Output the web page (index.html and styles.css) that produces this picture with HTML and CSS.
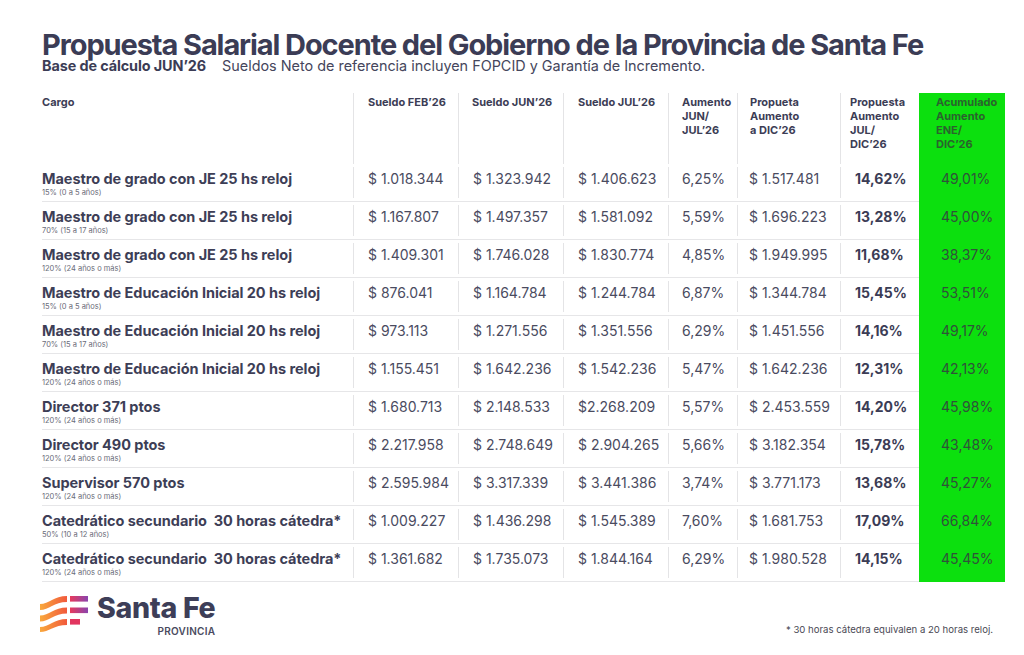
FILE: index.html
```html
<!DOCTYPE html>
<html lang="es">
<head>
<meta charset="utf-8">
<title>Propuesta Salarial Docente</title>
<link rel="stylesheet" href="styles.css">
</head>
<body>
<main class="page">
  <h1 class="title">Propuesta Salarial Docente del Gobierno de la Provincia de Santa Fe</h1>
  <p class="subtitle"><strong>Base de cálculo JUN’26</strong> Sueldos Neto de referencia incluyen FOPCID y Garantía de Incremento.</p>

  <div class="table">
    <div class="row head">
      <div class="cell">Cargo</div>
      <div class="cell">Sueldo FEB’26</div>
      <div class="cell">Sueldo JUN’26</div>
      <div class="cell">Sueldo JUL’26</div>
      <div class="cell">Aumento<br>JUN/<br>JUL’26</div>
      <div class="cell">Propueta<br>Aumento<br>a DIC’26</div>
      <div class="cell">Propuesta<br>Aumento<br>JUL/<br>DIC’26</div>
      <div class="cell green">Acumulado<br>Aumento<br>ENE/<br>DIC’26</div>
    </div>

    <div class="row body">
      <div class="cell name"><span class="cargo">Maestro de grado con JE 25 hs reloj</span><span class="sub">15% (0 a 5 años)</span></div>
      <div class="cell">$ 1.018.344</div><div class="cell">$ 1.323.942</div><div class="cell">$ 1.406.623</div>
      <div class="cell">6,25%</div><div class="cell">$ 1.517.481</div><div class="cell bold">14,62%</div><div class="cell green">49,01%</div>
    </div>
    <div class="row body">
      <div class="cell name"><span class="cargo">Maestro de grado con JE 25 hs reloj</span><span class="sub">70% (15 a 17 años)</span></div>
      <div class="cell">$ 1.167.807</div><div class="cell">$ 1.497.357</div><div class="cell">$ 1.581.092</div>
      <div class="cell">5,59%</div><div class="cell">$ 1.696.223</div><div class="cell bold">13,28%</div><div class="cell green">45,00%</div>
    </div>
    <div class="row body">
      <div class="cell name"><span class="cargo">Maestro de grado con JE 25 hs reloj</span><span class="sub">120% (24 años o más)</span></div>
      <div class="cell">$ 1.409.301</div><div class="cell">$ 1.746.028</div><div class="cell">$ 1.830.774</div>
      <div class="cell">4,85%</div><div class="cell">$ 1.949.995</div><div class="cell bold">11,68%</div><div class="cell green">38,37%</div>
    </div>
    <div class="row body">
      <div class="cell name"><span class="cargo">Maestro de Educación Inicial 20 hs reloj</span><span class="sub">15% (0 a 5 años)</span></div>
      <div class="cell">$ 876.041</div><div class="cell">$ 1.164.784</div><div class="cell">$ 1.244.784</div>
      <div class="cell">6,87%</div><div class="cell">$ 1.344.784</div><div class="cell bold">15,45%</div><div class="cell green">53,51%</div>
    </div>
    <div class="row body">
      <div class="cell name"><span class="cargo">Maestro de Educación Inicial 20 hs reloj</span><span class="sub">70% (15 a 17 años)</span></div>
      <div class="cell">$ 973.113</div><div class="cell">$ 1.271.556</div><div class="cell">$ 1.351.556</div>
      <div class="cell">6,29%</div><div class="cell">$ 1.451.556</div><div class="cell bold">14,16%</div><div class="cell green">49,17%</div>
    </div>
    <div class="row body">
      <div class="cell name"><span class="cargo">Maestro de Educación Inicial 20 hs reloj</span><span class="sub">120% (24 años o más)</span></div>
      <div class="cell">$ 1.155.451</div><div class="cell">$ 1.642.236</div><div class="cell">$ 1.542.236</div>
      <div class="cell">5,47%</div><div class="cell">$ 1.642.236</div><div class="cell bold">12,31%</div><div class="cell green">42,13%</div>
    </div>
    <div class="row body">
      <div class="cell name"><span class="cargo">Director 371 ptos</span><span class="sub">120% (24 años o más)</span></div>
      <div class="cell">$ 1.680.713</div><div class="cell">$ 2.148.533</div><div class="cell">$2.268.209</div>
      <div class="cell">5,57%</div><div class="cell">$ 2.453.559</div><div class="cell bold">14,20%</div><div class="cell green">45,98%</div>
    </div>
    <div class="row body">
      <div class="cell name"><span class="cargo">Director 490 ptos</span><span class="sub">120% (24 años o más)</span></div>
      <div class="cell">$ 2.217.958</div><div class="cell">$ 2.748.649</div><div class="cell">$ 2.904.265</div>
      <div class="cell">5,66%</div><div class="cell">$ 3.182.354</div><div class="cell bold">15,78%</div><div class="cell green">43,48%</div>
    </div>
    <div class="row body">
      <div class="cell name"><span class="cargo">Supervisor 570 ptos</span><span class="sub">120% (24 años o más)</span></div>
      <div class="cell">$ 2.595.984</div><div class="cell">$ 3.317.339</div><div class="cell">$ 3.441.386</div>
      <div class="cell">3,74%</div><div class="cell">$ 3.771.173</div><div class="cell bold">13,68%</div><div class="cell green">45,27%</div>
    </div>
    <div class="row body">
      <div class="cell name"><span class="cargo">Catedrático secundario&nbsp; 30 horas cátedra*</span><span class="sub">50% (10 a 12 años)</span></div>
      <div class="cell">$ 1.009.227</div><div class="cell">$ 1.436.298</div><div class="cell">$ 1.545.389</div>
      <div class="cell">7,60%</div><div class="cell">$ 1.681.753</div><div class="cell bold">17,09%</div><div class="cell green">66,84%</div>
    </div>
    <div class="row body">
      <div class="cell name"><span class="cargo">Catedrático secundario&nbsp; 30 horas cátedra*</span><span class="sub">120% (24 años o más)</span></div>
      <div class="cell">$ 1.361.682</div><div class="cell">$ 1.735.073</div><div class="cell">$ 1.844.164</div>
      <div class="cell">6,29%</div><div class="cell">$ 1.980.528</div><div class="cell bold">14,15%</div><div class="cell green">45,45%</div>
    </div>
  </div>

  <footer class="footer">
    <div class="logo">
      <svg class="logo-mark" width="50" height="38" viewBox="0 0 50 38" aria-hidden="true">
        <defs>
          <linearGradient id="gOr" x1="0" y1="0" x2="1" y2="0">
            <stop offset="0" stop-color="#f9a83c"/>
            <stop offset="1" stop-color="#f1593c"/>
          </linearGradient>
          <linearGradient id="gPu" x1="0" y1="0" x2="1" y2="0">
            <stop offset="0" stop-color="#e63a5c"/>
            <stop offset="1" stop-color="#8a44ae"/>
          </linearGradient>
        </defs>
        <path d="M1,10 C10,10 15,2 28,2 L28,8 C15,8 10,16 1,16 Z" fill="url(#gOr)"/>
        <path d="M1,21.5 C10,21.5 15,13.5 28,13.5 L28,19.5 C15,19.5 10,27.5 1,27.5 Z" fill="url(#gOr)"/>
        <path d="M1,33 C10,33 15,25 28,25 L28,31 C15,31 10,38 1,38 Z" fill="url(#gOr)"/>
        <rect x="31" y="2" width="18" height="5.6" fill="url(#gPu)"/>
        <rect x="31" y="13.5" width="18" height="5.6" fill="url(#gPu)"/>
        <rect x="31" y="25" width="10" height="5.6" fill="#e2355f"/>
      </svg>
      <div class="logo-text">
        <span class="logo-name">Santa Fe</span>
        <span class="logo-prov">PROVINCIA</span>
      </div>
    </div>
    <p class="note">* 30 horas cátedra equivalen a 20 horas reloj.</p>
  </footer>
</main>
</body>
</html>
```

FILE: styles.css
```css
* { box-sizing: border-box; }

html, body {
  margin: 0;
  padding: 0;
  background: #ffffff;
}

body {
  font-family: "Inter", "Noto Sans", "Liberation Sans", sans-serif;
  color: #3c3d55;
  width: 1024px;
  height: 655px;
  overflow: hidden;
}

.page {
  padding: 31px 0 0 42px;
}

.title {
  margin: 0;
  font-size: 29px;
  line-height: 27px;
  font-weight: 700;
  letter-spacing: -1.1px;
  color: #3b3c55;
}

.subtitle {
  margin: 2px 0 0;
  font-size: 14.4px;
  line-height: 12px;
  color: #45465c;
  white-space: nowrap;
}

.subtitle strong {
  font-weight: 700;
  letter-spacing: -0.1px;
  color: #3b3c55;
  margin-right: 12px;
}

.table {
  margin-top: 21px;
  width: 963px;
}

.row {
  display: grid;
  grid-template-columns: 311px 105px 105px 105px 69px 103px 79px 86px;
}

.cell {
  white-space: nowrap;
}

.row .cell + .cell {
  background: linear-gradient(#e4e4e6, #e4e4e6) left center / 1px calc(100% - 6px) no-repeat;
}

.row .cell.green {
  background: #0ce00e;
}

/* header */
.head {
  height: 71px;
}

.head .cell {
  padding-top: 2px;
  font-size: 11px;
  line-height: 14px;
  font-weight: 700;
  color: #3c3d55;
}

.head .cell + .cell {
  background-size: 1px 100%;
}

.head .cell:nth-child(2) { padding-left: 15px; }
.head .cell:nth-child(3) { padding-left: 14px; }
.head .cell:nth-child(4) { padding-left: 15px; }
.head .cell:nth-child(5) { padding-left: 14px; }
.head .cell:nth-child(6) { padding-left: 13px; }
.head .cell:nth-child(7) { padding-left: 10px; }
.head .cell:nth-child(8) { padding-left: 17px; }

.head .cell.green {
  color: #2a632d;
}

/* body rows */
.body .cell {
  height: 38px;
  padding-top: 7px;
  border-bottom: 1px solid #e6e6e8;
  font-size: 14px;
  line-height: 16px;
  color: #4a4b5f;
}

.body .cell.green {
  border-bottom-color: transparent;
  color: #30523a;
}

.body .cell:nth-child(2) { padding-left: 15px; }
.body .cell:nth-child(3) { padding-left: 15px; }
.body .cell:nth-child(4) { padding-left: 15px; }
.body .cell:nth-child(5) { padding-left: 14px; }
.body .cell:nth-child(6) { padding-left: 12px; }
.body .cell:nth-child(7) { padding-left: 15px; }
.body .cell:nth-child(8) { padding-left: 22px; }

.body .cell.bold {
  font-weight: 700;
  color: #3b3c55;
}

.name {
  display: flex;
  flex-direction: column;
}

.cargo {
  font-size: 14.5px;
  line-height: 16px;
  font-weight: 700;
  letter-spacing: -0.05px;
  color: #3d3e56;
}

.sub {
  margin-top: 1px;
  font-size: 7.5px;
  line-height: 10px;
  color: #6a6b78;
}

/* footer */
.footer {
  width: 963px;
  display: flex;
  justify-content: space-between;
  align-items: flex-start;
  padding-top: 12px;
}

.logo {
  display: flex;
  align-items: flex-start;
  gap: 8px;
  margin-left: -3px;
}

.logo-mark {
  display: block;
  flex: none;
}

.logo-text {
  display: flex;
  flex-direction: column;
  align-items: flex-end;
}

.logo-name {
  font-size: 28.5px;
  line-height: 28px;
  font-weight: 800;
  letter-spacing: -0.3px;
  color: #3d3e58;
}

.logo-prov {
  margin-top: 3px;
  font-size: 10px;
  line-height: 12px;
  font-weight: 600;
  letter-spacing: 0.3px;
  color: #4a4b60;
}

.note {
  margin: 30px 12px 0 0;
  font-size: 9.6px;
  line-height: 12px;
  color: #4a4a55;
}
```
